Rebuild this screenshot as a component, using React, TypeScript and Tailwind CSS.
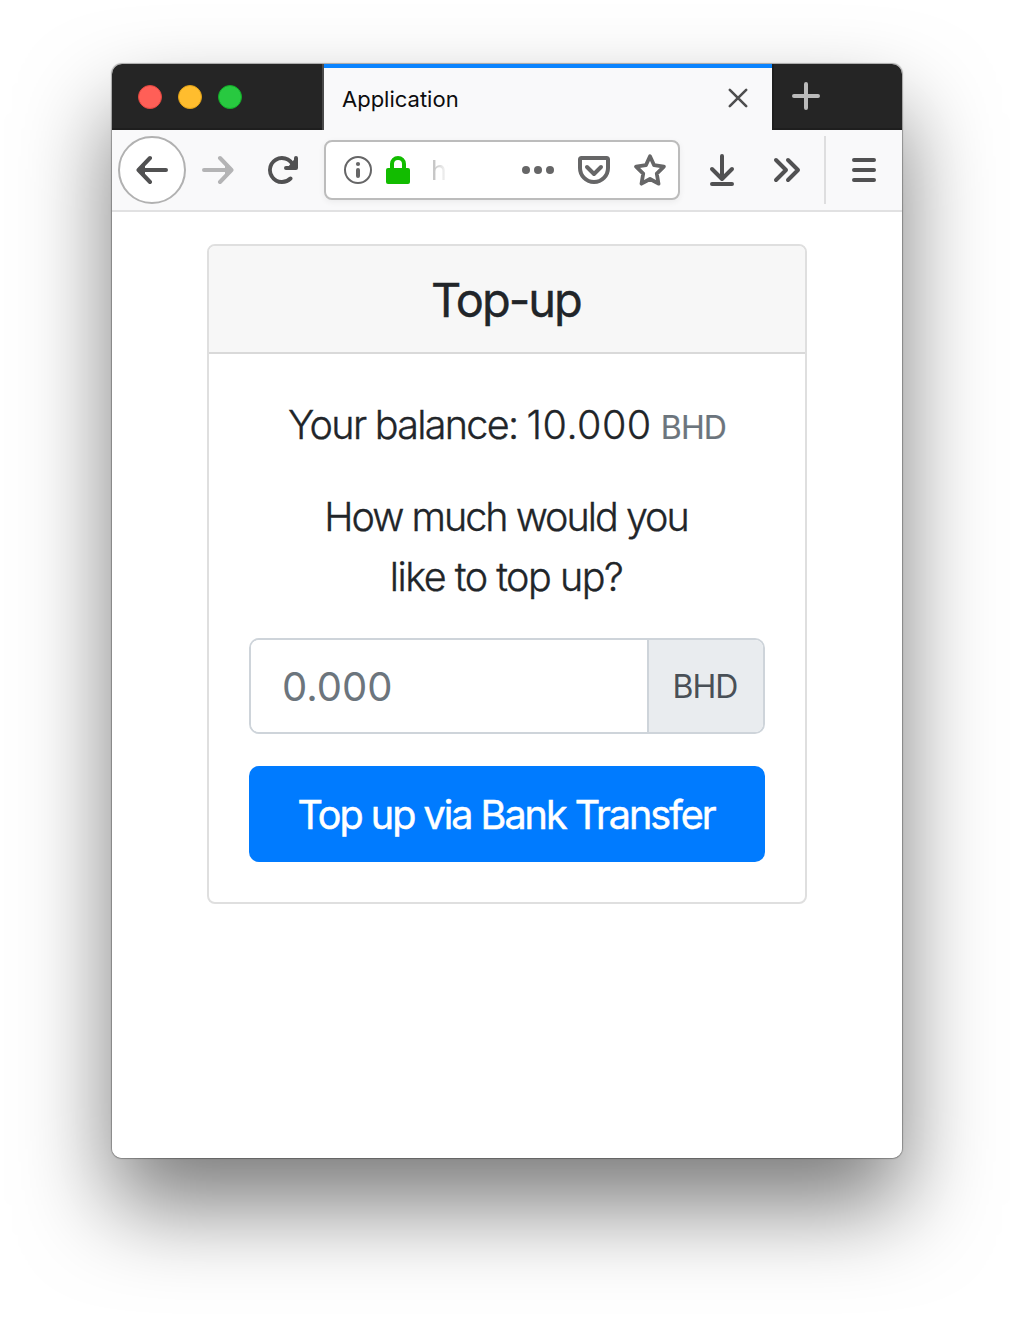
import React from "react";

type IconProps = { className?: string; children: React.ReactNode };

function Icon({ className = "", children }: IconProps) {
  return (
    <svg
      viewBox="0 0 32 32"
      className={`size-8 shrink-0 ${className}`}
      fill="none"
      stroke="currentColor"
      strokeWidth={4}
      strokeLinecap="round"
      strokeLinejoin="round"
    >
      {children}
    </svg>
  );
}

function TabStrip() {
  return (
    <div className="flex h-[66px] bg-[#252525]">
      <div className="flex w-[212px] gap-4 border-r-2 border-[#4a4a4a] pt-[21px] pl-[26px] shadow-[inset_0_-2px_0_#1e1e1e]">
        <span className="size-6 rounded-full border border-[#e2463f] bg-[#ff5f57]" />
        <span className="size-6 rounded-full border border-[#e1a116] bg-[#ffbd2e]" />
        <span className="size-6 rounded-full border border-[#12ac28] bg-[#28c940]" />
      </div>
      <div className="flex w-[448px] items-center justify-between border-t-4 border-[#0a84ff] bg-[#f9f9fa] pr-[18px] pl-[18px]">
        <span className="pb-px text-[22px] leading-8 text-[#0c0c0d]">Application</span>
        <Icon className="mb-0.5 text-[#4f4f50]">
          <path d="M7.8 7.8l16.4 16.4M24.2 7.8L7.8 24.2" strokeWidth={2.6} />
        </Icon>
      </div>
      <div className="flex-1 pt-4 pl-[18px] shadow-[inset_2px_-2px_0_#1e1e1e]">
        <Icon className="text-[#bababa]">
          <path d="M16 4v24M4 16h24" />
        </Icon>
      </div>
    </div>
  );
}

function AddressBar() {
  return (
    <div className="ml-[26px] flex h-[60px] w-[356px] items-center rounded-lg border-2 border-[#bcbcbc] bg-white pl-4 text-[#666667] shadow-[0_2px_6px_rgba(0,0,0,0.06)]">
      <Icon>
        <circle cx="16" cy="16" r="13" strokeWidth={2} />
        <circle cx="16" cy="10" r="2.1" fill="currentColor" stroke="none" />
        <path d="M16 16v6" />
      </Icon>
      <Icon className="ml-2 text-[#12bc00]">
        <path d="M10 15V10a6 6 0 0 1 12 0v5" />
        <rect x="4" y="14" width="24" height="16" rx="2" fill="currentColor" stroke="none" />
      </Icon>
      <span className="ml-[17px] w-[34px] bg-linear-to-r from-[#b8b8b8] to-white to-50% bg-clip-text pt-0.5 text-[27px] leading-8 text-transparent">
        ht
      </span>
      <Icon className="ml-[57px]">
        <g fill="currentColor" stroke="none">
          <circle cx="4" cy="16" r="4" />
          <circle cx="16" cy="16" r="4" />
          <circle cx="28" cy="16" r="4" />
        </g>
      </Icon>
      <Icon className="ml-6">
        <path d="M3.5 4h25a1.5 1.5 0 0 1 1.5 1.5V14a14 14 0 0 1-28 0V5.500a1.500 1.500 0 0 1 1.500-1.500z" />
        <path d="M9 13l7 7 7-7" />
      </Icon>
      <Icon className="ml-6">
        <path
          d="M16 2.300l4.100 8.900 9.800 1.400-7.100 7 1.700 10.100L16 25l-8.500 4.700 1.700-10.100-7.100-7 9.800-1.400z"
          strokeWidth={3.8}
        />
      </Icon>
    </div>
  );
}

function Toolbar() {
  return (
    <div className="flex h-[82px] items-center border-b-2 border-[#e1e1e2] bg-[#f9f9fa] pl-1.5 text-[#515152]">
      <div className="flex size-[68px] items-center justify-center rounded-full border-2 border-[#b1b1b1] bg-white">
        <Icon>
          <path d="M14 4L2.500 16 14 28M3 16h27" />
          <path d="M3 16l6-5v10z" fill="currentColor" stroke="none" />
        </Icon>
      </div>
      <Icon className="ml-4 text-[#b4b4b5]">
        <path d="M18 4l11.500 12L18 28M29 16H2" />
        <path d="M29 16l-6-5v10z" fill="currentColor" stroke="none" />
      </Icon>
      <svg viewBox="0 0 16 16" className="ml-8 size-8 shrink-0" fill="currentColor">
        <path d="M15 1a1 1 0 0 0-1 1v2.418A6.995 6.995 0 1 0 8 15a6.954 6.954 0 0 0 4.950-2.050 1 1 0 0 0-1.414-1.414A5.019 5.019 0 1 1 12.549 6H10a1 1 0 0 0 0 2h5a1 1 0 0 0 1-1V2a1 1 0 0 0-1-1z" />
        <path d="M14.200 2.600l-3.400 4.200h4z" />
      </svg>
      <AddressBar />
      <Icon className="ml-[26px]">
        <path d="M16 2v22M6 15l10 10 10-10M6 30h20" />
        <path d="M16 26l-5-6h10z" fill="currentColor" stroke="none" />
      </Icon>
      <Icon className="ml-[33px]">
        <path d="M5 6l10 10L5 26M17 6l10 10-10 10" />
      </Icon>
      <div className="ml-[21px] h-[68px] w-0.5 bg-[#dededf]" />
      <Icon className="ml-[22px]">
        <path d="M6 6h20M6 16h20M6 26h20" />
      </Icon>
    </div>
  );
}

function TopUpCard() {
  return (
    <div className="mt-8 ml-[95px] w-[600px] rounded-lg border-2 border-[#dfdfdf] text-center text-[#212529]">
      <h1 className="h-[108px] rounded-t-md border-b-2 border-[#d9d9d9] bg-[#f7f7f7] pt-6 pr-0.5 text-[47px] leading-[60px] font-normal tracking-[-2px] [-webkit-text-stroke:0.35px]">
        Top-up
      </h1>
      <div className="px-10 pt-[41px] pb-10 text-[39.5px] leading-[60px] font-light tracking-[-2px]">
        <p className="h-[60px] whitespace-nowrap [-webkit-text-stroke:0.35px]">
          <span className="tracking-[-1.7px]">Your balance:</span>{" "}
          <span className="tracking-[0.5px]">10.000</span>{" "}
          <small className="text-[32px] leading-none font-normal tracking-[-0.9px] text-[#6c757d] [-webkit-text-stroke:0.2px]">
            BHD
          </small>
        </p>
        <p className="mt-8 pr-0.5 [-webkit-text-stroke:0.35px]">
          How much would you
          <br />
          <span className="tracking-[-1.5px]">like to top up?</span>
        </p>
        <div className="mt-[31px] flex h-24 rounded-[10px] border-2 border-[#ced4da]">
          <input
            className="min-w-0 flex-1 rounded-l-lg bg-white pt-0.5 pr-8 pl-[31px] text-[40px] font-normal tracking-normal outline-none placeholder:text-[#6c757d]"
            placeholder="0.000"
          />
          <span className="flex w-[116px] items-center justify-center rounded-r-lg border-l-2 border-[#ced4da] bg-[#e9ecef] pt-0.5 pr-0.5 text-[32px] font-normal tracking-[-0.9px] text-[#495057]">
            BHD
          </span>
        </div>
        <button className="mt-8 block h-24 w-full rounded-[10px] bg-[#007bff] pt-0.5 pr-0.5 text-[39.5px] font-normal tracking-[-2px] whitespace-nowrap text-white [-webkit-text-stroke:0.5px]">
          Top up via Bank Transfer
        </button>
      </div>
    </div>
  );
}

export default function App() {
  return (
    <div className="h-[1318px] w-[1014px] overflow-hidden bg-white pt-16 pl-28 font-['Inter',sans-serif]">
      <div className="h-[1094px] w-[790px] rounded-[10px] shadow-[0_0_1px_1px_rgba(0,0,0,0.3),0_48px_90px_rgba(0,0,0,0.52)]">
        <div className="h-full overflow-hidden rounded-[10px] bg-white">
          <TabStrip />
          <Toolbar />
          <TopUpCard />
        </div>
      </div>
    </div>
  );
}
